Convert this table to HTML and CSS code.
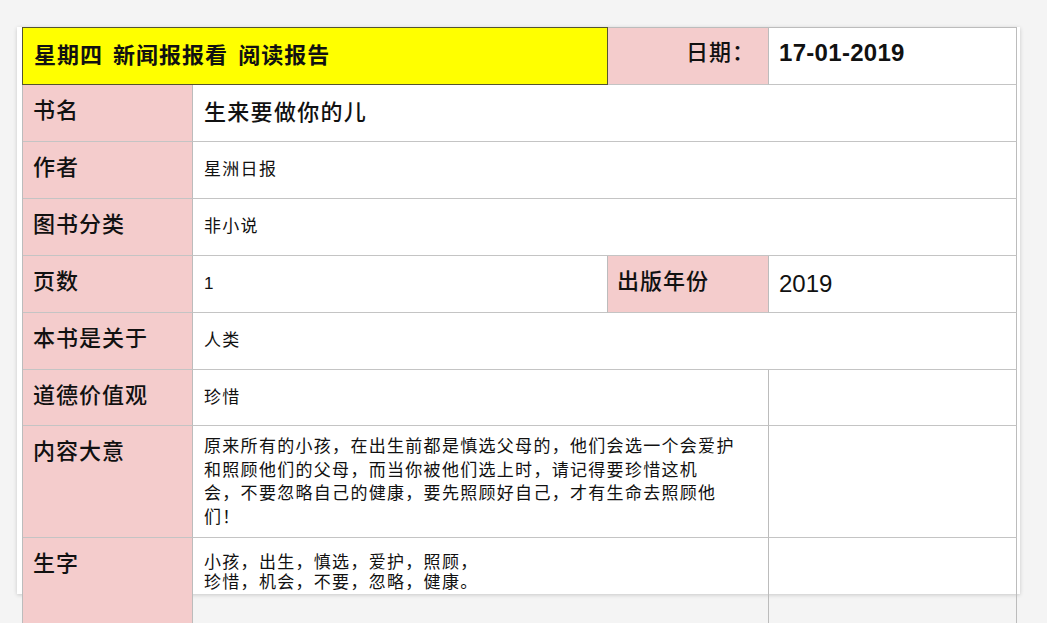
FILE: index.html
```html
<!DOCTYPE html>
<html lang="zh-Hans">
<head>
<meta charset="utf-8">
<title>阅读报告</title>
<link rel="stylesheet" href="styles.css">
</head>
<body>
<div class="page">
  <div class="sheet">
    <div class="c title">星期四 新闻报报看 阅读报告</div>
    <div class="c lab head-lab">日期：</div>
    <div class="c date">17-01-2019</div>

    <div class="c lab">书名</div>
    <div class="c val big span3">生来要做你的儿</div>

    <div class="c lab">作者</div>
    <div class="c val span3">星洲日报</div>

    <div class="c lab">图书分类</div>
    <div class="c val span3">非小说</div>

    <div class="c lab">页数</div>
    <div class="c val">1</div>
    <div class="c lab lab3">出版年份</div>
    <div class="c val num">2019</div>

    <div class="c lab">本书是关于</div>
    <div class="c val span3">人类</div>

    <div class="c lab">道德价值观</div>
    <div class="c val span2">珍惜</div>
    <div class="c empty"></div>

    <div class="c lab">内容大意</div>
    <div class="c val span2 para"><p>原来所有的小孩，在出生前都是慎选父母的，他们会选一个会爱护<br>和照顾他们的父母，而当你被他们选上时，请记得要珍惜这机<br>会，不要忽略自己的健康，要先照顾好自己，才有生命去照顾他<br>们！</p></div>
    <div class="c empty"></div>

    <div class="c lab">生字</div>
    <div class="c val span2 words"><p>小孩，出生，慎选，爱护，照顾，<br>珍惜，机会，不要，忽略，健康。</p></div>
    <div class="c empty"></div>
  </div>
</div>
</body>
</html>
```

FILE: styles.css
```css
html, body {
  margin: 0;
  padding: 0;
  height: 623px;
  overflow: hidden;
  background: #f4f4f4;
}

body {
  font-family: "Liberation Sans", "Noto Sans CJK SC", sans-serif;
  color: #111;
}

.page {
  margin: 27px 0 0 17px;
  width: 1003px;
  height: 567px;
  padding-left: 5px;
  box-sizing: border-box;
  background: #fff;
  box-shadow: 0 1px 4px rgba(0, 0, 0, 0.18);
}

.sheet {
  display: grid;
  grid-template-columns: 170px 415px 161px 248px;
  grid-template-rows: 57px 57px 57px 57px 57px 57px 56px 112px 110px;
  border-top: 1px solid #bcbcbc;
  border-left: 1px solid #bcbcbc;
  width: max-content;
}

.c {
  box-sizing: border-box;
  border-right: 1px solid #bcbcbc;
  border-bottom: 1px solid #c4c4c4;
  display: flex;
  align-items: center;
  min-width: 0;
}

.c p {
  margin: 0;
}

.title {
  grid-column: span 2;
  margin: -1px 0 0 -1px;
  background: #ffff00;
  border: 1px solid #55552f;
  padding: 0 0 6px 11px;
  font-size: 22px;
  font-weight: 700;
  letter-spacing: 1px;
  word-spacing: 3px;
}

.lab {
  background: #f4cccc;
  align-items: flex-start;
  padding: 11px 0 0 10px;
  font-size: 22px;
  line-height: 30px;
  font-weight: 500;
  letter-spacing: 1px;
}

.lab3 {
  padding-left: 9px;
}

.head-lab {
  align-items: center;
  justify-content: flex-end;
  padding: 0 13px 6px 0;
}

.date {
  padding: 0 0 6px 10px;
  font-size: 24px;
  font-weight: 700;
  letter-spacing: 0.3px;
}

.val {
  padding-left: 11px;
  font-size: 17px;
  line-height: 24px;
  letter-spacing: 1.3px;
}

.val.big {
  font-size: 22px;
  letter-spacing: 1.3px;
  font-weight: 500;
}

.val.num {
  padding-left: 10px;
  font-size: 24px;
  letter-spacing: 0;
}

.span3 {
  grid-column: span 3;
}

.span2 {
  grid-column: span 2;
}

.para {
  align-items: flex-start;
  padding-top: 9px;
  line-height: 23.5px;
}

.words {
  align-items: flex-start;
  padding-top: 15px;
  line-height: 20px;
}
```
